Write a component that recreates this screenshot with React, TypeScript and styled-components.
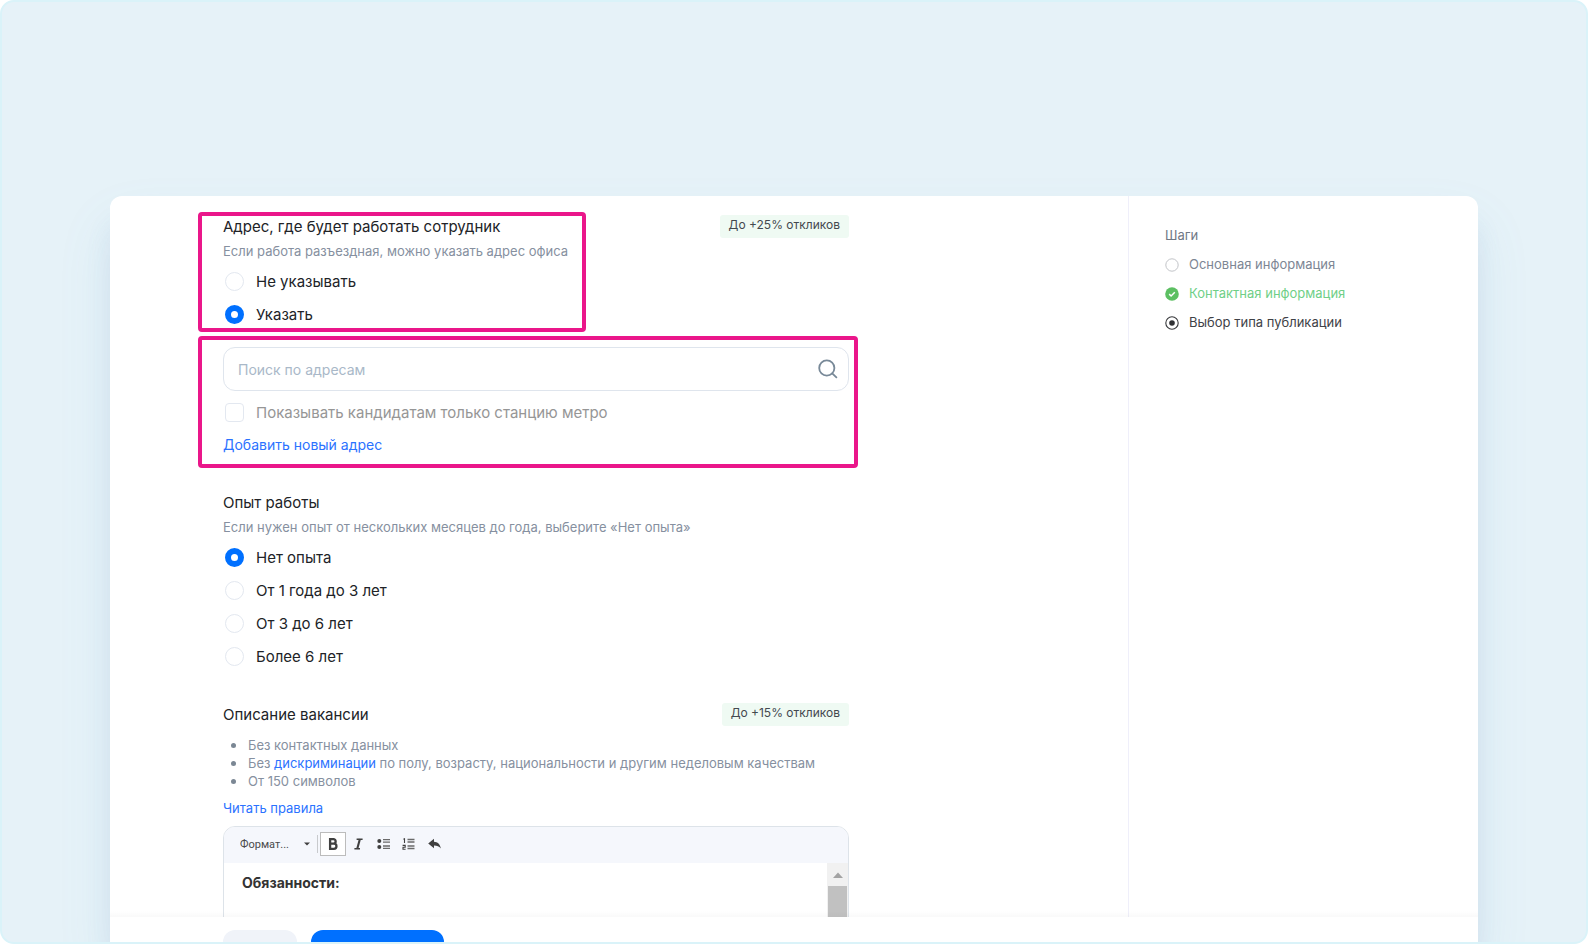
import React from 'react';
import styled, { createGlobalStyle, css } from 'styled-components';

const GlobalStyle = createGlobalStyle`
  *, *::before, *::after { box-sizing: border-box; }
  body { margin: 0; background: #ffffff; font-family: Inter, "Liberation Sans", sans-serif; color: #212327; }
  button, input, select { font-family: inherit; }
  h2, p, ul, ol, fieldset { margin: 0; padding: 0; border: 0; min-width: 0; }
`;

const Backdrop = styled.div`
  height: 100vh;
  display: flex;
  padding: 194px 108px 0;
  border: 2px solid #daf3f9;
  border-radius: 14px;
  background: #e6f2f8;
  overflow: hidden;
`;

const Card = styled.div`
  flex: 1;
  min-width: 0;
  display: flex;
  flex-direction: column;
  background: #ffffff;
  border-radius: 12px 12px 0 0;
  box-shadow: 0 30px 56px rgba(90, 165, 200, 0.1), 0 28px 24px rgba(120, 150, 200, 0.12);
`;

const Columns = styled.div`
  flex: 1;
  min-height: 0;
  display: flex;
`;

const Main = styled.main`
  flex: 1;
  min-width: 0;
  padding: 19px 24px 0 113px;
  overflow-y: auto;
  scrollbar-width: none;
`;

const Form = styled.form`
  max-width: 626px;
  display: flex;
  flex-direction: column;
`;

const Section = styled.section<{ $gap?: number }>`
  margin-top: ${(p) => p.$gap ?? 0}px;
`;

const frame = css`
  content: "";
  position: absolute;
  border: 4px solid #ea168a;
  border-radius: 4px;
  pointer-events: none;
`;

const QuestionFrame = styled.div`
  position: relative;
  &::after { ${frame} top: -3px; bottom: -1px; left: -25px; width: 388px; }
`;

const AddressFrame = styled.div`
  position: relative;
  margin-top: 16px;
  &::after { ${frame} top: -11px; bottom: -12px; left: -25px; right: -9px; }
`;

const Header = styled.div`
  display: flex;
  justify-content: space-between;
  align-items: flex-start;
`;

const Title = styled.h2`
  font-size: 15px;
  line-height: 24px;
  font-weight: 400;
`;

const Badge = styled.span`
  padding: 1px 9px 4px;
  border-radius: 3px;
  background: #effaf3;
  color: #44494f;
  font-size: 12px;
  line-height: 18px;
`;

const Hint = styled.p`
  margin-top: 3px;
  font-size: 13px;
  line-height: 18px;
  color: #8690a0;
`;

const Options = styled.div`
  margin-top: 5px;
`;

const Option = styled.label<{ $muted?: boolean }>`
  display: flex;
  align-items: center;
  gap: 12px;
  height: 33px;
  padding-left: 2px;
  font-size: 15px;
  color: ${(p) => (p.$muted ? '#969696' : '#212327')};
`;

const Radio = styled.input.attrs({ type: 'radio' })`
  appearance: none;
  width: 19px;
  height: 19px;
  margin: 0;
  border: 1px solid #e3e8f0;
  border-radius: 50%;
  background: #ffffff;
  &:checked { border: 6px solid #0070ff; }
`;

const Checkbox = styled.input.attrs({ type: 'checkbox' })`
  appearance: none;
  width: 19px;
  height: 19px;
  margin: 0;
  border: 1px solid #e3e8f0;
  border-radius: 4px;
  background: #ffffff;
  &:checked { background: #0070ff; }
`;

const SearchBox = styled.label`
  display: flex;
  align-items: center;
  height: 44px;
  margin-bottom: 5px;
  padding: 0 10px 0 14px;
  border: 1px solid #dfe5ed;
  border-radius: 12px;
`;

const SearchInput = styled.input`
  flex: 1;
  min-width: 0;
  padding: 0;
  border: 0;
  outline: 0;
  background: transparent;
  font-size: 14px;
  color: #212327;
  &::placeholder { color: #a9b8c8; opacity: 1; }
`;

const Link = styled.a`
  color: #2b72ff;
  text-decoration: none;
`;

const AddLink = styled(Link)`
  display: block;
  width: fit-content;
  margin-top: 5px;
  font-size: 14px;
  line-height: 22px;
`;

const RulesLink = styled(Link)`
  display: block;
  width: fit-content;
  margin: 9px 0;
  font-size: 13px;
  line-height: 18px;
`;

const Rules = styled.ul`
  margin-top: 9px;
  list-style: none;
  font-size: 13px;
  line-height: 18px;
  color: #8690a0;
`;

const Rule = styled.li`
  display: flex;
  align-items: center;
  gap: 12px;
  padding-left: 8px;
  &::before {
    content: "";
    flex: none;
    width: 5px;
    height: 5px;
    border-radius: 50%;
    background: #7b8794;
  }
`;

const Editor = styled.div`
  border: 1px solid #dde3e9;
  border-radius: 12px;
  overflow: hidden;
`;

const Toolbar = styled.div`
  display: flex;
  align-items: center;
  height: 36px;
  padding: 0 0 2px 16px;
  background: #f5f7fc;
`;

const FormatBox = styled.div`
  display: flex;
  align-items: center;
  width: 78px;
  height: 18px;
  border-right: 1px solid #c8cacd;
`;

const FormatSelect = styled.select`
  appearance: none;
  width: 64px;
  padding: 0;
  border: 0;
  outline: 0;
  background: transparent;
  font-family: Roboto, sans-serif;
  font-size: 11px;
  color: #4a4a4a;
`;

const Tool = styled.button<{ $active?: boolean }>`
  display: flex;
  align-items: center;
  justify-content: center;
  width: 25px;
  height: 24px;
  padding: 0;
  border: 1px solid ${(p) => (p.$active ? '#bcbcbc' : 'transparent')};
  background: ${(p) => (p.$active ? '#ffffff' : 'transparent')};
  ${(p) => p.$active && 'width: 26px; margin-left: 2px;'}
`;

const EditorBody = styled.div`
  display: flex;
  height: 200px;
`;

const EditorText = styled.div`
  flex: 1;
  padding: 10px 18px;
  outline: 0;
  font-size: 14px;
  line-height: 20px;
  font-weight: 700;
  color: #333333;
`;

const Scrollbar = styled.div`
  width: 21px;
  display: flex;
  flex-direction: column;
  align-items: center;
  background: #f1f1f1;
`;

const ScrollArrow = styled.div`
  display: flex;
  align-items: center;
  height: 23px;
`;

const ScrollThumb = styled.div`
  width: 19px;
  height: 120px;
  background: #c1c1c1;
`;

const Sidebar = styled.aside`
  flex: none;
  width: 350px;
  padding: 25px 24px 0 36px;
  border-left: 1px solid #efeffa;
  font-size: 13px;
  line-height: 29px;
`;

const StepsTitle = styled.h2`
  font-size: 13px;
  line-height: 29px;
  font-weight: 400;
  color: #6f7885;
`;

const Steps = styled.ol`
  list-style: none;
`;

const Step = styled.li<{ $color: string }>`
  display: flex;
  align-items: center;
  gap: 10px;
  color: ${(p) => p.$color};
`;

const Footer = styled.footer`
  position: relative;
  display: flex;
  gap: 14px;
  height: 25px;
  padding: 13px 113px 0;
  overflow: hidden;
  background: #ffffff;
`;

const FooterShade = styled.div`
  flex: none;
  position: relative;
  z-index: 1;
  height: 6px;
  margin-top: -6px;
  background: linear-gradient(rgba(0, 0, 0, 0), rgba(0, 0, 0, 0.025));
`;

const Action = styled.button<{ $primary?: boolean }>`
  flex: none;
  width: ${(p) => (p.$primary ? 133 : 74)}px;
  height: 44px;
  border: 0;
  border-radius: 12px;
  background: ${(p) => (p.$primary ? '#0070ff' : '#f0f3f9')};
`;

const SearchIcon = () => (
  <svg width="20" height="20" viewBox="0 0 20 20" fill="none" stroke="#788998" strokeWidth="1.8" aria-hidden="true">
    <circle cx="8.8" cy="9" r="7.6" />
    <path d="M14.2 14.4 18.4 18.4" strokeLinecap="round" />
  </svg>
);

const BoldIcon = () => (
  <svg width="10" height="12" viewBox="0 0 10 12" fill="none" stroke="#404040" strokeWidth="2.3" aria-hidden="true">
    <path d="M2.1 1.2H5.4A2.2 2.2 0 0 1 5.4 5.7H2.1ZM2.1 5.7H5.9A2.5 2.5 0 0 1 5.9 10.8H2.1Z" />
  </svg>
);

const ItalicIcon = () => (
  <svg width="10" height="12" viewBox="0 0 10 12" fill="none" stroke="#404040" aria-hidden="true">
    <path d="M2.6 1.2H8.6M.4 10.8H6" strokeWidth="1.6" />
    <path d="M5.9 1 3.2 11" strokeWidth="2.1" />
  </svg>
);

const BulletsIcon = () => (
  <svg width="13" height="12" viewBox="0 0 13 12" aria-hidden="true">
    <circle cx="2.3" cy="3" r="2" fill="#404040" />
    <circle cx="2.3" cy="9" r="2" fill="#404040" />
    <path d="M6 1.7h7M6 4.2h7M6 8h7M6 10.4h7" stroke="#6a6a6a" strokeWidth="1.3" />
  </svg>
);

const NumbersIcon = () => (
  <svg width="13" height="12" viewBox="0 0 13 12" fill="none" aria-hidden="true">
    <path d="M1.4 1.3 2.5.8V5M.6 7.4H3.2V9.2H1V11.2H3.6" stroke="#404040" strokeWidth="1.1" />
    <path d="M5.5 1.5H12.5M5.5 4H12.5M5.5 8H12.5M5.5 10.5H12.5" stroke="#6a6a6a" strokeWidth="1.3" />
  </svg>
);

const UndoIcon = () => (
  <svg width="14" height="12" viewBox="0 0 14 12" fill="#404040" aria-hidden="true">
    <path d="M7 .8V3.7C10.6 3.8 13.2 6.2 13.8 10.4 12 8.2 10.2 7.4 7 7.4V10.2L1.2 5.5Z" />
  </svg>
);

const PendingIcon = () => (
  <svg width="14" height="14" viewBox="0 0 14 14" fill="none" aria-hidden="true">
    <circle cx="7" cy="7" r="6.2" stroke="#c2c4c8" />
  </svg>
);

const DoneIcon = () => (
  <svg width="14" height="14" viewBox="0 0 14 14" fill="none" aria-hidden="true">
    <circle cx="7" cy="7" r="6.8" fill="#5cbf62" />
    <path d="M4.2 7.1 6.1 9 9.8 5.3" stroke="#ffffff" strokeWidth="1.5" />
  </svg>
);

const CurrentIcon = () => (
  <svg width="14" height="14" viewBox="0 0 14 14" fill="none" aria-hidden="true">
    <circle cx="7" cy="7" r="6.2" stroke="#38393c" strokeWidth="1.1" />
    <circle cx="7" cy="7" r="2.8" fill="#303134" />
  </svg>
);

const experience = ['Нет опыта', 'От 1 года до 3 лет', 'От 3 до 6 лет', 'Более 6 лет'];

export default function App() {
  return (
    <>
      <GlobalStyle />
      <Backdrop>
        <Card>
          <Columns>
            <Main>
              <Form>
                <Section>
                  <QuestionFrame>
                    <Header>
                      <Title>Адрес, где будет работать сотрудник</Title>
                      <Badge>До +25% откликов</Badge>
                    </Header>
                    <Hint>Если работа разъездная, можно указать адрес офиса</Hint>
                    <Options>
                      <Option><Radio name="address" />Не указывать</Option>
                      <Option><Radio name="address" defaultChecked />Указать</Option>
                    </Options>
                  </QuestionFrame>
                  <AddressFrame>
                    <SearchBox>
                      <SearchInput type="text" placeholder="Поиск по адресам" aria-label="Поиск по адресам" />
                      <SearchIcon />
                    </SearchBox>
                    <Option $muted><Checkbox />Показывать кандидатам только станцию метро</Option>
                    <AddLink href="#address">Добавить новый адрес</AddLink>
                  </AddressFrame>
                </Section>

                <Section $gap={35}>
                  <Header><Title>Опыт работы</Title></Header>
                  <Hint>Если нужен опыт от нескольких месяцев до года, выберите «Нет опыта»</Hint>
                  <Options>
                    {experience.map((label, i) => (
                      <Option key={label}><Radio name="experience" defaultChecked={i === 0} />{label}</Option>
                    ))}
                  </Options>
                </Section>

                <Section $gap={30}>
                  <Header>
                    <Title>Описание вакансии</Title>
                    <Badge>До +15% откликов</Badge>
                  </Header>
                  <Rules>
                    <Rule>Без контактных данных</Rule>
                    <Rule>
                      <span>Без <Link href="#discrimination">дискриминации</Link> по полу, возрасту, национальности и другим неделовым качествам</span>
                    </Rule>
                    <Rule>От 150 символов</Rule>
                  </Rules>
                  <RulesLink href="#rules">Читать правила</RulesLink>
                  <Editor>
                    <Toolbar>
                      <FormatBox>
                        <FormatSelect aria-label="Формат"><option>Формат...</option></FormatSelect>
                        <svg width="6" height="4" viewBox="0 0 6 4" aria-hidden="true"><path d="M0 .5H6L3 3.5Z" fill="#404040" /></svg>
                      </FormatBox>
                      <Tool type="button" $active aria-label="Полужирный"><BoldIcon /></Tool>
                      <Tool type="button" aria-label="Курсив"><ItalicIcon /></Tool>
                      <Tool type="button" aria-label="Маркированный список"><BulletsIcon /></Tool>
                      <Tool type="button" aria-label="Нумерованный список"><NumbersIcon /></Tool>
                      <Tool type="button" aria-label="Отменить"><UndoIcon /></Tool>
                    </Toolbar>
                    <EditorBody>
                      <EditorText contentEditable suppressContentEditableWarning role="textbox" aria-label="Описание вакансии">Обязанности:</EditorText>
                      <Scrollbar>
                        <ScrollArrow>
                          <svg width="10" height="6" viewBox="0 0 10 6" aria-hidden="true"><path d="M0 6 5 .5 10 6Z" fill="#a3a3a3" /></svg>
                        </ScrollArrow>
                        <ScrollThumb />
                      </Scrollbar>
                    </EditorBody>
                  </Editor>
                </Section>
              </Form>
            </Main>
            <Sidebar>
              <StepsTitle>Шаги</StepsTitle>
              <Steps>
                <Step $color="#7d8694"><PendingIcon />Основная информация</Step>
                <Step $color="#6fcf87"><DoneIcon />Контактная информация</Step>
                <Step $color="#3f4247"><CurrentIcon />Выбор типа публикации</Step>
              </Steps>
            </Sidebar>
          </Columns>
          <FooterShade />
          <Footer>
            <Action type="button" aria-label="Назад" />
            <Action type="button" $primary aria-label="Продолжить" />
          </Footer>
        </Card>
      </Backdrop>
    </>
  );
}
